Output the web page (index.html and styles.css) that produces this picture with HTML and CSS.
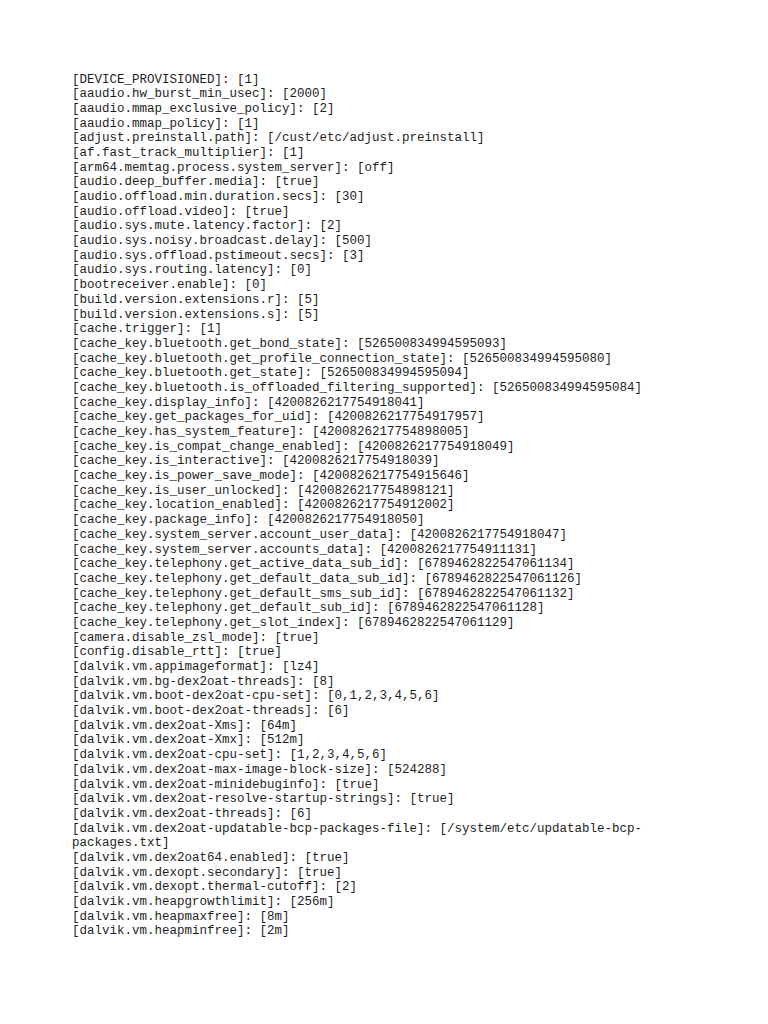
FILE: index.html
```html
<!DOCTYPE html>
<html>
<head>
<meta charset="utf-8">
<link rel="stylesheet" href="styles.css">
</head>
<body>
<pre class="props">[DEVICE_PROVISIONED]: [1]
[aaudio.hw_burst_min_usec]: [2000]
[aaudio.mmap_exclusive_policy]: [2]
[aaudio.mmap_policy]: [1]
[adjust.preinstall.path]: [/cust/etc/adjust.preinstall]
[af.fast_track_multiplier]: [1]
[arm64.memtag.process.system_server]: [off]
[audio.deep_buffer.media]: [true]
[audio.offload.min.duration.secs]: [30]
[audio.offload.video]: [true]
[audio.sys.mute.latency.factor]: [2]
[audio.sys.noisy.broadcast.delay]: [500]
[audio.sys.offload.pstimeout.secs]: [3]
[audio.sys.routing.latency]: [0]
[bootreceiver.enable]: [0]
[build.version.extensions.r]: [5]
[build.version.extensions.s]: [5]
[cache.trigger]: [1]
[cache_key.bluetooth.get_bond_state]: [526500834994595093]
[cache_key.bluetooth.get_profile_connection_state]: [526500834994595080]
[cache_key.bluetooth.get_state]: [526500834994595094]
[cache_key.bluetooth.is_offloaded_filtering_supported]: [526500834994595084]
[cache_key.display_info]: [4200826217754918041]
[cache_key.get_packages_for_uid]: [4200826217754917957]
[cache_key.has_system_feature]: [4200826217754898005]
[cache_key.is_compat_change_enabled]: [4200826217754918049]
[cache_key.is_interactive]: [4200826217754918039]
[cache_key.is_power_save_mode]: [4200826217754915646]
[cache_key.is_user_unlocked]: [4200826217754898121]
[cache_key.location_enabled]: [4200826217754912002]
[cache_key.package_info]: [4200826217754918050]
[cache_key.system_server.account_user_data]: [4200826217754918047]
[cache_key.system_server.accounts_data]: [4200826217754911131]
[cache_key.telephony.get_active_data_sub_id]: [6789462822547061134]
[cache_key.telephony.get_default_data_sub_id]: [6789462822547061126]
[cache_key.telephony.get_default_sms_sub_id]: [6789462822547061132]
[cache_key.telephony.get_default_sub_id]: [6789462822547061128]
[cache_key.telephony.get_slot_index]: [6789462822547061129]
[camera.disable_zsl_mode]: [true]
[config.disable_rtt]: [true]
[dalvik.vm.appimageformat]: [lz4]
[dalvik.vm.bg-dex2oat-threads]: [8]
[dalvik.vm.boot-dex2oat-cpu-set]: [0,1,2,3,4,5,6]
[dalvik.vm.boot-dex2oat-threads]: [6]
[dalvik.vm.dex2oat-Xms]: [64m]
[dalvik.vm.dex2oat-Xmx]: [512m]
[dalvik.vm.dex2oat-cpu-set]: [1,2,3,4,5,6]
[dalvik.vm.dex2oat-max-image-block-size]: [524288]
[dalvik.vm.dex2oat-minidebuginfo]: [true]
[dalvik.vm.dex2oat-resolve-startup-strings]: [true]
[dalvik.vm.dex2oat-threads]: [6]
[dalvik.vm.dex2oat-updatable-bcp-packages-file]: [/system/etc/updatable-bcp-packages.txt]
[dalvik.vm.dex2oat64.enabled]: [true]
[dalvik.vm.dexopt.secondary]: [true]
[dalvik.vm.dexopt.thermal-cutoff]: [2]
[dalvik.vm.heapgrowthlimit]: [256m]
[dalvik.vm.heapmaxfree]: [8m]
[dalvik.vm.heapminfree]: [2m]</pre>
</body>
</html>
```

FILE: styles.css
```css
html, body {
  margin: 0;
  padding: 0;
  background: #ffffff;
}

.props {
  margin: 0;
  padding: 72.5px 72px 0 72px;
  font-family: "Liberation Mono", "DejaVu Sans Mono", monospace;
  font-size: 12.5px;
  line-height: 14.68px;
  color: #1e1e1e;
  white-space: pre-wrap;
  word-wrap: break-word;
}
```
